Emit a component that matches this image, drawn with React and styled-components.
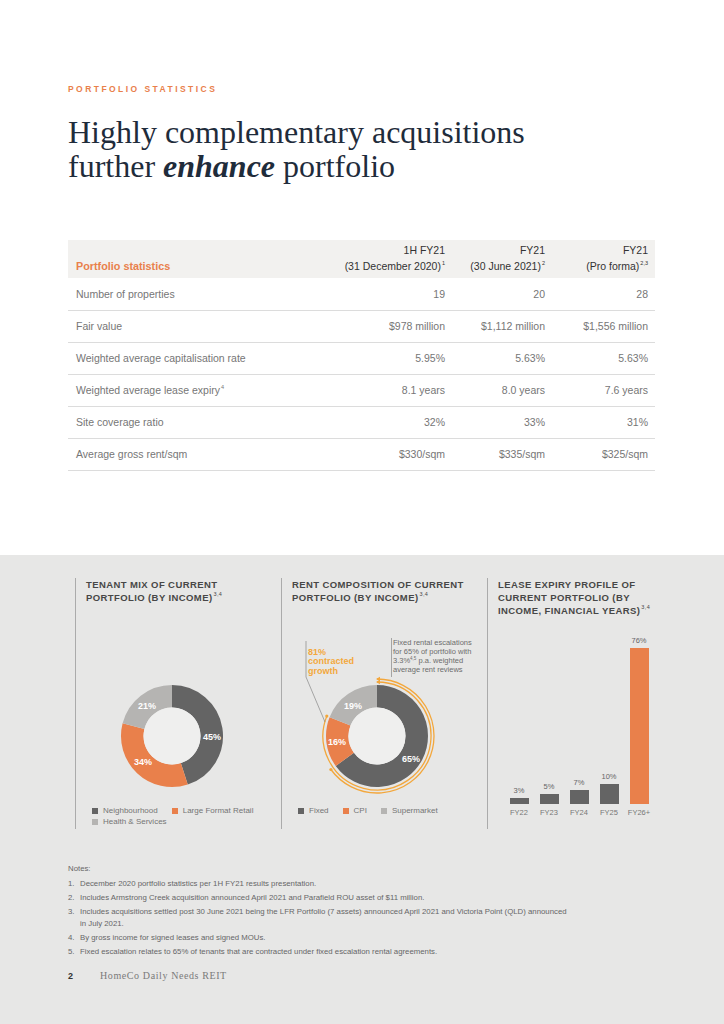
import React from 'react';
import styled, { createGlobalStyle } from 'styled-components';

const ORANGE = '#e9804b';
const AMBER = '#f3a73c';
const DARK = '#646464';
const LIGHT = '#b5b4b2';

const GlobalStyle = createGlobalStyle`
  body {
    margin: 0;
    background: #ffffff;
    font-family: "Liberation Sans", Arial, sans-serif;
  }
`;

const STATS = [
  { label: 'Number of properties', values: ['19', '20', '28'] },
  { label: 'Fair value', values: ['$978 million', '$1,112 million', '$1,556 million'] },
  { label: 'Weighted average capitalisation rate', values: ['5.95%', '5.63%', '5.63%'] },
  { label: 'Weighted average lease expiry', sup: '4', values: ['8.1 years', '8.0 years', '7.6 years'] },
  { label: 'Site coverage ratio', values: ['32%', '33%', '31%'] },
  { label: 'Average gross rent/sqm', values: ['$330/sqm', '$335/sqm', '$325/sqm'] },
];

const BARS = [
  { year: 'FY22', pct: 3 },
  { year: 'FY23', pct: 5 },
  { year: 'FY24', pct: 7 },
  { year: 'FY25', pct: 10 },
  { year: 'FY26+', pct: 76, highlight: true },
];

const NOTES = [
  'December 2020 portfolio statistics per 1H FY21 results presentation.',
  'Includes Armstrong Creek acquisition announced April 2021 and Parafield ROU asset of $11 million.',
  'Includes acquisitions settled post 30 June 2021 being the LFR Portfolio (7 assets) announced April 2021 and Victoria Point (QLD) announced in July 2021.',
  'By gross income for signed leases and signed MOUs.',
  'Fixed escalation relates to 65% of tenants that are contracted under fixed escalation rental agreements.',
];

const polar = (cx, cy, r, a) => [
  cx + r * Math.sin((a * Math.PI) / 180),
  cy - r * Math.cos((a * Math.PI) / 180),
];

const arcPath = (cx, cy, r, a0, a1) => {
  const [x0, y0] = polar(cx, cy, r, a0);
  const [x1, y1] = polar(cx, cy, r, a1);
  const large = a1 - a0 > 180 ? 1 : 0;
  return `M${x0} ${y0} A${r} ${r} 0 ${large} 1 ${x1} ${y1}`;
};

const Donut = ({ width, height, cx, cy, segments, children }) => {
  let start = 0;
  return (
    <DonutSvg width={width} height={height} viewBox={`0 0 ${width} ${height}`}>
      {segments.map((s) => {
        const end = start + s.pct * 3.6;
        const d = arcPath(cx, cy, 39.75, start, end);
        start = end;
        return <path key={s.name} d={d} fill="none" stroke={s.color} strokeWidth="22.5" />;
      })}
      <circle cx={cx} cy={cy} r="28.5" fill="#efefee" />
      {segments.map((s) => (
        <text
          key={s.name + 'l'}
          x={cx + s.lx}
          y={cy + s.ly}
          fill="#ffffff"
          fontSize="9"
          fontWeight="700"
          fontFamily="Liberation Sans, Arial, sans-serif"
          textAnchor="middle"
          dominantBaseline="central">
          {s.pct}%
        </text>
      ))}
      {children}
    </DonutSvg>
  );
};

const Arrow = ({ cx, cy, r, pct }) => {
  const end = pct * 3.6;
  const [ex, ey] = polar(cx, cy, r, end);
  const top = cy - r;
  return (
    <g>
      <path d={arcPath(cx, cy, r, 0, end)} fill="none" stroke={AMBER} strokeWidth="1.3" />
      <polygon points={`${cx - 1},${top} ${cx + 3},${top - 2.2} ${cx + 3},${top + 2.2}`} fill={AMBER} />
      <circle cx={ex} cy={ey} r="1.6" fill={AMBER} />
    </g>
  );
};

const Legend = ({ items }) => (
  <LegendRow>
    {items.map((i) => (
      <LegendItem key={i.name}>
        <Swatch $color={i.color} />
        {i.name}
      </LegendItem>
    ))}
  </LegendRow>
);

const App = () => {
  const tenantMix = [
    { name: 'Neighbourhood', pct: 45, color: DARK, lx: 40, ly: 1 },
    { name: 'Large Format Retail', pct: 34, color: ORANGE, lx: -29, ly: 26 },
    { name: 'Health & Services', pct: 21, color: LIGHT, lx: -25, ly: -30 },
  ];
  const rentMix = [
    { name: 'Fixed', pct: 65, color: DARK, lx: 34, ly: 23 },
    { name: 'CPI', pct: 16, color: ORANGE, lx: -40, ly: 6 },
    { name: 'Supermarket', pct: 19, color: LIGHT, lx: -24, ly: -30 },
  ];
  const rcx = 85;
  const rcy = 106;

  return (
    <>
      <GlobalStyle />
      <Page>
        <Top>
          <Eyebrow>Portfolio statistics</Eyebrow>
          <Title>
            Highly complementary acquisitions
            <br />
            further <em>enhance</em> portfolio
          </Title>
          <StatsTable>
            <thead>
              <tr>
                <HeadCell>Portfolio statistics</HeadCell>
                <HeadCell $num>
                  1H FY21
                  <br />
                  (31 December 2020)<Sup>1</Sup>
                </HeadCell>
                <HeadCell $num>
                  FY21
                  <br />
                  (30 June 2021)<Sup>2</Sup>
                </HeadCell>
                <HeadCell $num>
                  FY21
                  <br />
                  (Pro forma)<Sup>2,3</Sup>
                </HeadCell>
              </tr>
            </thead>
            <tbody>
              {STATS.map((row) => (
                <tr key={row.label}>
                  <Cell>
                    {row.label}
                    {row.sup && <Sup>{row.sup}</Sup>}
                  </Cell>
                  {row.values.map((v, i) => (
                    <Cell key={i} $num>
                      {v}
                    </Cell>
                  ))}
                </tr>
              ))}
            </tbody>
          </StatsTable>
        </Top>

        <Bottom>
          <Charts>
            <ChartCol>
              <ChartTitle>
                Tenant mix of current
                <br />
                portfolio (by income)<Sup>3,4</Sup>
              </ChartTitle>
              <ChartBox>
                <DonutHolder $left={21}>
                  <Donut width={130} height={130} cx={65} cy={65} segments={tenantMix} />
                </DonutHolder>
              </ChartBox>
              <Legend items={tenantMix} />
            </ChartCol>

            <ChartCol>
              <ChartTitle>
                Rent composition of current
                <br />
                portfolio (by income)<Sup>3,4</Sup>
              </ChartTitle>
              <ChartBox>
                <DonutHolder $left={0}>
                  <Donut width={185} height={171} cx={rcx} cy={rcy} segments={rentMix}>
                    <Arrow cx={rcx} cy={rcy} r={57} pct={65} />
                    <Arrow cx={rcx} cy={rcy} r={54} pct={81} />
                    <polyline points="14,11 14,47 33,92" fill="none" stroke="#777" strokeWidth="0.6" />
                    <line x1="99.5" y1="8" x2="99.5" y2="47" stroke="#777" strokeWidth="0.6" />
                  </Donut>
                  <GrowthNote>
                    81%
                    <br />
                    contracted
                    <br />
                    growth
                  </GrowthNote>
                  <FixedNote>
                    Fixed rental escalations
                    <br />
                    for 65% of portfolio with
                    <br />
                    3.3%<NoteSup>4,5</NoteSup> p.a. weighted
                    <br />
                    average rent reviews
                  </FixedNote>
                </DonutHolder>
              </ChartBox>
              <Legend items={rentMix} />
            </ChartCol>

            <ChartCol>
              <ChartTitle>
                Lease expiry profile of
                <br />
                current portfolio (by
                <br />
                income, financial years)<Sup>3,4</Sup>
              </ChartTitle>
              <ChartBox>
                <BarChart>
                  {BARS.map((b) => (
                    <BarCol key={b.year}>
                      <BarValue>{b.pct}%</BarValue>
                      <Bar $highlight={b.highlight} style={{ height: `${b.pct * 2.05}px` }} />
                      <BarLabel>{b.year}</BarLabel>
                    </BarCol>
                  ))}
                </BarChart>
              </ChartBox>
            </ChartCol>
          </Charts>

          <Notes>
            <NotesHead>Notes:</NotesHead>
            <NoteList>
              {NOTES.map((n, i) => (
                <NoteItem key={i}>
                  <NoteNum>{i + 1}.</NoteNum>
                  <span>{n}</span>
                </NoteItem>
              ))}
            </NoteList>
          </Notes>

          <Footer>
            <PageNum>2</PageNum>
            <Brand>HomeCo Daily Needs REIT</Brand>
          </Footer>
        </Bottom>
      </Page>
    </>
  );
};

export default App;

const Page = styled.div`
  width: 724px;
  height: 1024px;
  display: flex;
  flex-direction: column;
  overflow: hidden;
`;

const Top = styled.section`
  flex: none;
  height: 555px;
  box-sizing: border-box;
  padding: 82px 69px 0 68px;
  background: #ffffff;
`;

const Eyebrow = styled.p`
  margin: 0;
  font-size: 8.5px;
  line-height: 14px;
  font-weight: 700;
  letter-spacing: 2.45px;
  text-transform: uppercase;
  color: ${ORANGE};
`;

const Title = styled.h1`
  margin: 19px 0 0;
  font-family: "Liberation Serif", "Times New Roman", serif;
  font-size: 32px;
  line-height: 34px;
  font-weight: 400;
  color: #1f2c3b;

  em {
    font-weight: 700;
    font-style: italic;
  }
`;

const StatsTable = styled.table`
  margin-top: 57px;
  width: 587px;
  border-collapse: collapse;
  table-layout: fixed;

  th:nth-child(2),
  td:nth-child(2) {
    width: 120px;
  }
  th:nth-child(3),
  td:nth-child(3) {
    width: 100px;
  }
  th:nth-child(4),
  td:nth-child(4) {
    width: 103px;
  }
`;

const HeadCell = styled.th`
  background: #f2f1ef;
  height: 38px;
  box-sizing: border-box;
  padding: 2px 7px 4px 8px;
  vertical-align: bottom;
  text-align: ${(p) => (p.$num ? 'right' : 'left')};
  font-size: ${(p) => (p.$num ? '10.5px' : '10.8px')};
  line-height: 16px;
  font-weight: ${(p) => (p.$num ? 400 : 700)};
  color: ${(p) => (p.$num ? '#333333' : ORANGE)};
  white-space: nowrap;
`;

const Cell = styled.td`
  height: 32px;
  box-sizing: border-box;
  padding: 0 7px 0 8px;
  border-bottom: 1px solid #dcdcdc;
  text-align: ${(p) => (p.$num ? 'right' : 'left')};
  font-size: 10.5px;
  color: #767676;
  white-space: nowrap;
`;

const Sup = styled.sup`
  font-size: 5.5px;
  font-weight: 400;
  vertical-align: 5px;
  line-height: 0;
  margin-left: 1px;
`;

const NoteSup = styled.sup`
  font-size: 4.5px;
  vertical-align: 3px;
  line-height: 0;
`;

const Bottom = styled.section`
  flex: 1;
  background: #e7e7e6;
  padding: 23px 31px 0 68px;
`;

const Charts = styled.div`
  margin-left: 7px;
  display: grid;
  grid-template-columns: repeat(3, 1fr);
`;

const ChartCol = styled.div`
  height: 251px;
  border-left: 1px solid #ababab;
  padding-left: 10px;
  display: flex;
  flex-direction: column;
`;

const ChartTitle = styled.h3`
  margin: 0;
  font-size: 9.5px;
  line-height: 13px;
  font-weight: 700;
  letter-spacing: 0.4px;
  text-transform: uppercase;
  color: #474747;
`;

const ChartBox = styled.div`
  flex: 1;
  display: flex;
  align-items: flex-end;
`;

const DonutHolder = styled.div`
  position: relative;
  margin: 0 0 4.5px ${(p) => p.$left}px;
`;

const DonutSvg = styled.svg`
  display: block;
  overflow: visible;
`;

const GrowthNote = styled.div`
  position: absolute;
  left: 16px;
  top: 18px;
  font-size: 9px;
  line-height: 9.5px;
  font-weight: 700;
  color: ${AMBER};
`;

const FixedNote = styled.div`
  position: absolute;
  left: 101px;
  top: 8px;
  font-size: 7.5px;
  line-height: 9.3px;
  color: #6d6d6d;
  white-space: nowrap;
`;

const LegendRow = styled.div`
  height: 24px;
  display: flex;
  flex-wrap: wrap;
  align-content: flex-start;
  column-gap: 14px;
  padding-left: 6px;
`;

const LegendItem = styled.span`
  display: inline-flex;
  align-items: center;
  font-size: 8px;
  line-height: 11px;
  color: #757575;
`;

const Swatch = styled.i`
  width: 6px;
  height: 6px;
  margin-right: 5px;
  background: ${(p) => p.$color};
`;

const BarChart = styled.div`
  display: flex;
  align-items: flex-end;
  padding: 0 0 11px 6px;
`;

const BarCol = styled.div`
  width: 30px;
  display: flex;
  flex-direction: column;
  align-items: center;
`;

const BarValue = styled.span`
  font-size: 7.5px;
  line-height: 9px;
  margin-bottom: 3px;
  color: #666;
`;

const Bar = styled.div`
  width: 19px;
  background: ${(p) => (p.$highlight ? ORANGE : DARK)};
`;

const BarLabel = styled.span`
  margin-top: 4px;
  font-size: 7.5px;
  line-height: 10px;
  color: #777;
`;

const Notes = styled.div`
  margin-top: 34px;
  color: #666;
  font-size: 7.8px;
`;

const NotesHead = styled.p`
  margin: 0;
  line-height: 12px;
`;

const NoteList = styled.ol`
  margin: 0;
  padding: 0;
  list-style: none;
  width: 500px;
`;

const NoteItem = styled.li`
  display: flex;
  margin-top: 3px;
  line-height: 11.2px;
`;

const NoteNum = styled.span`
  flex: none;
  width: 12px;
`;

const Footer = styled.div`
  margin-top: 12px;
  display: flex;
  align-items: baseline;
`;

const PageNum = styled.span`
  width: 32px;
  font-size: 9px;
  font-weight: 700;
  line-height: 14px;
  color: #333;
`;

const Brand = styled.span`
  font-family: "Liberation Serif", "Times New Roman", serif;
  font-size: 10px;
  letter-spacing: 0.6px;
  color: #7a7a7a;
`;
